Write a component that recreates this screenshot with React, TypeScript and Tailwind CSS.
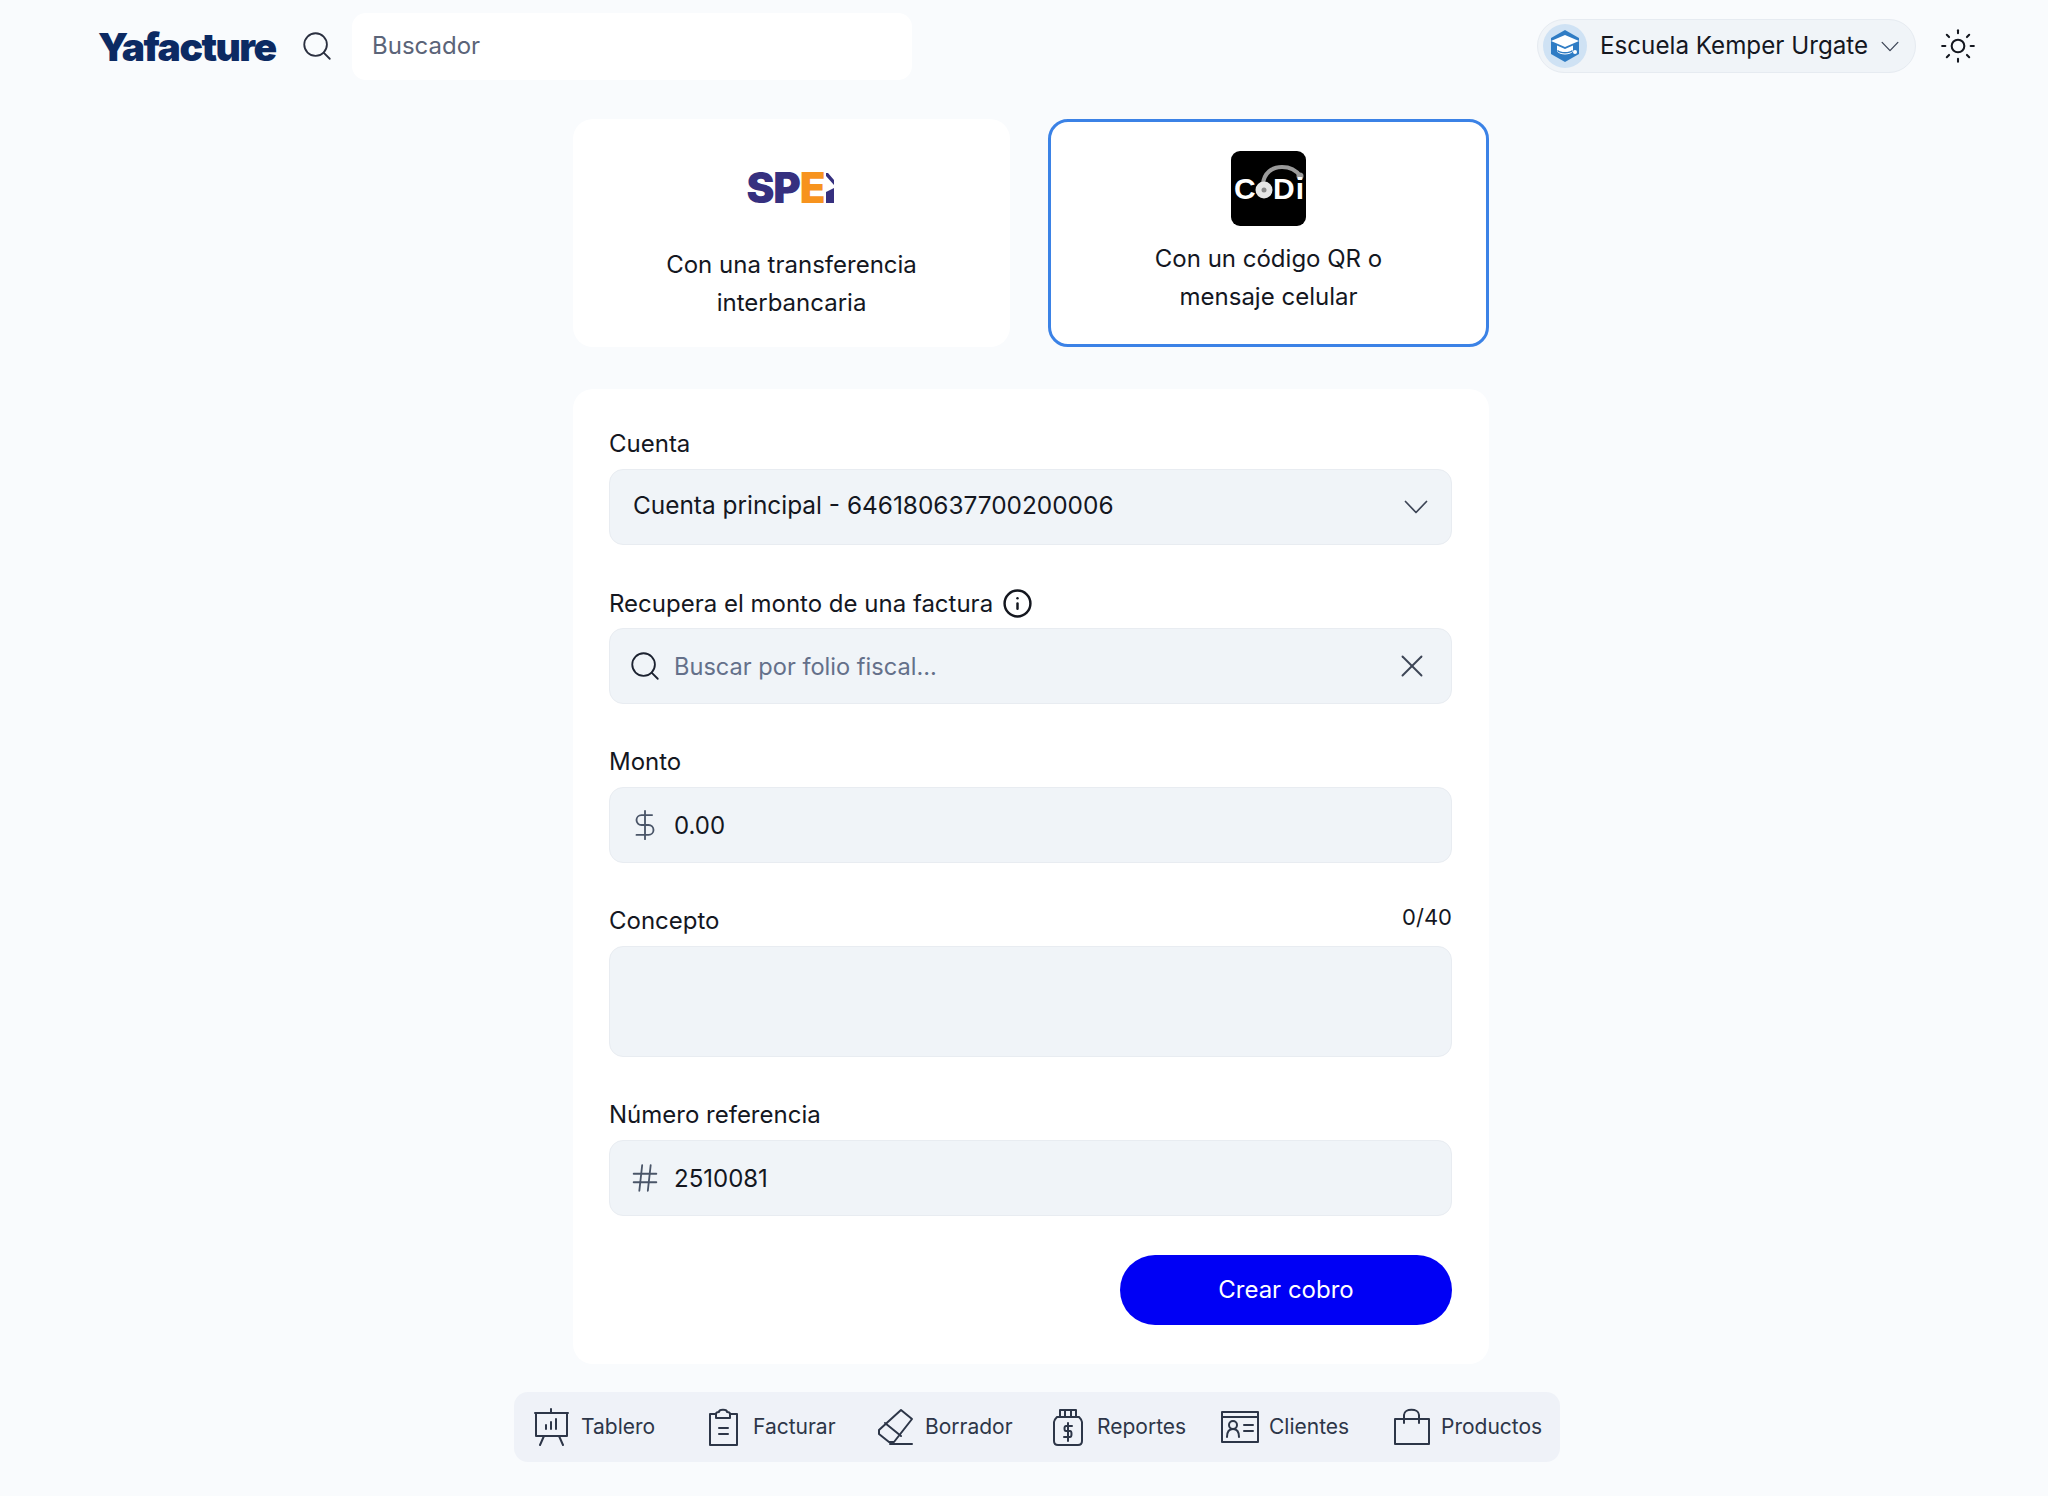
import type { ReactNode } from 'react'
import { Search, Sun, X, DollarSign, Hash, Info } from 'lucide-react'

const font = { fontFamily: 'Inter, "Noto Sans", sans-serif' }

function Chevron({ className, width, height }: { className: string; width: number; height: number }) {
  return (
    <svg className={className} width={width} height={height} viewBox="0 0 24 14" fill="none" stroke="currentColor" strokeWidth="1.7" strokeLinecap="round" strokeLinejoin="round">
      <path d="M1.5 1.5 12 12.5 22.5 1.5" />
    </svg>
  )
}

function SpeiLogo() {
  return (
    <div className="flex h-[36px] w-[90px] items-center text-[42px] leading-none font-black tracking-[-1.2px]">
      <span className="text-[#36307f]">SP</span>
      <span className="text-[#f7931e]">E</span>
      <svg className="ml-[2px] shrink-0" width="8" height="30" viewBox="0 0 8 30">
        <path d="M0 0h2l6 7V0v12L0 3zM0 19l8-4v15H0z" fill="#36307f" />
      </svg>
    </div>
  )
}

function CodiLogo() {
  return (
    <div className="relative h-[75px] w-[75px] rounded-[9px] bg-black" style={{ fontFamily: '"Liberation Sans", sans-serif' }}>
      <svg className="absolute inset-0" width="75" height="75" viewBox="0 0 75 75" fill="none">
        <path d="M32 33c1-11 9-17 19-17 8 0 14 3 18 9" stroke="#9b9b9b" strokeWidth="4" strokeLinecap="round" />
        <circle cx="69" cy="25" r="3.5" fill="#9b9b9b" />
        <circle cx="33" cy="39" r="8.5" fill="#e6e6e6" />
        <circle cx="33" cy="39" r="2.5" fill="#8a8a8a" />
      </svg>
      <span className="absolute top-[23px] left-[3px] text-[30px] leading-[30px] font-bold text-white">C</span>
      <span className="absolute top-[23px] left-[42px] text-[30px] leading-[30px] font-bold tracking-[1px] text-white">Di</span>
    </div>
  )
}

function SchoolBadge() {
  return (
    <div className="flex h-[44px] w-[44px] shrink-0 items-center justify-center rounded-full bg-[#cfe2f4]">
      <svg width="34" height="34" viewBox="0 0 34 34">
        <path d="M17 1 31 9v16l-14 8-14-8V9z" fill="#2f7cc4" />
        <path d="M17 6 31 12 17 18 3 12z" fill="#fff" />
        <path d="M9 16.5v6c3 4 13 4 16 0v-6l-8 3.5z" fill="#fff" />
        <path d="M9.5 21.5c3 3 12 3 15 0" stroke="#2f7cc4" strokeWidth="1.4" fill="none" />
        <circle cx="27" cy="23" r="2" fill="#fff" />
      </svg>
    </div>
  )
}

const navIconProps = {
  width: 38,
  height: 38,
  viewBox: '0 0 38 38',
  fill: 'none',
  stroke: '#2d3648',
  strokeWidth: 2,
  strokeLinecap: 'round' as const,
  strokeLinejoin: 'round' as const,
}

const navItems: { label: string; icon: ReactNode }[] = [
  {
    label: 'Tablero',
    icon: (
      <svg {...navIconProps}>
        <path d="M18 1v4M2 5h33M3 5h31v23H3zM11 28l-4 9M26 28l4 9M13 21v-4M18 21v-7M23 21V11" />
      </svg>
    ),
  },
  {
    label: 'Facturar',
    icon: (
      <svg {...navIconProps}>
        <path d="M11 6H5v31h27V6h-7M11 10h14V6c0-2-3-2-3-2 0-3-8-3-8 0 0 0-3 0-3 2zM14 20h9M14 26h9" />
      </svg>
    ),
  },
  {
    label: 'Borrador',
    icon: (
      <svg {...navIconProps}>
        <path d="M24 2 35 11 17 34h-5l-10-8v-4zM8 15l16 13M13 36h22" />
      </svg>
    ),
  },
  {
    label: 'Reportes',
    icon: (
      <svg {...navIconProps}>
        <path d="M11 2h16v7H11zM16 2v7M22 2v7M8 9h22c2 2 3 3 3 5v19c0 3-2 4-4 4H9c-2 0-4-1-4-4V14c0-2 1-3 3-5zM23 18h-6c-2 0-2 5 0 5h4c2 0 2 6 0 6h-6M19 15v18" />
      </svg>
    ),
  },
  {
    label: 'Clientes',
    icon: (
      <svg {...navIconProps}>
        <path d="M1 4h36v30H1zM1 9h36M6 29c0-6 3-8 6-8s6 2 6 8M23 17h9M23 23h9" />
        <circle cx="12" cy="17" r="4" />
      </svg>
    ),
  },
  {
    label: 'Productos',
    icon: (
      <svg {...navIconProps}>
        <path d="M2 11h34v25H2zM11 15V7c0-7 15-7 15 0v8" />
      </svg>
    ),
  },
]

function Field({ label, right, children }: { label: ReactNode; right?: ReactNode; children: ReactNode }) {
  return (
    <div className="flex flex-col gap-[11px]">
      <div className="flex h-[30px] items-start justify-between">
        <div className="flex items-center gap-[9px] pt-[1px] text-[24px] leading-[30px] text-[#14171f]">{label}</div>
        {right}
      </div>
      {children}
    </div>
  )
}

function InputBox({ icon, children, trailing }: { icon?: ReactNode; children: ReactNode; trailing?: ReactNode }) {
  return (
    <div className="flex h-[76px] items-center rounded-[14px] border border-[#e8ecf1] bg-[#f0f4f8]">
      {icon && <div className="flex w-[64px] shrink-0 items-center justify-center pl-[5px] text-[#4a5568]">{icon}</div>}
      <div className="min-w-0 flex-1">{children}</div>
      {trailing}
    </div>
  )
}

export default function App() {
  return (
    <div className="min-h-[1496px] bg-[#f9fbfd] text-[#14171f]" style={font}>
      <header className="flex h-[92px] items-center pl-[98px] pr-[71px]">
        <div className="w-[178px] text-[39px] leading-none font-black tracking-[-1.5px] text-[#0c2a63]">
          Yafacture
        </div>
        <Search className="ml-[24px] text-[#2b3040]" size={34} strokeWidth={1.3} />
        <div className="ml-[18px] flex h-[67px] w-[560px] items-center rounded-[14px] bg-white pl-[20px] text-[24px] text-[#5b6478]">
          Buscador
        </div>
        <div className="ml-auto flex h-[54px] w-[379px] items-center rounded-full border border-[#e6ebf1] bg-[#f0f4f8] pl-[5px]">
          <SchoolBadge />
          <span className="ml-[13px] text-[24.2px] whitespace-nowrap text-[#14171f]">Escuela Kemper Urgate</span>
          <Chevron className="ml-[13px] text-[#3d4556]" width={18} height={11} />
        </div>
        <Sun className="ml-[23px] text-[#14171f]" size={38} strokeWidth={1.3} />
      </header>

      <main className="ml-[573px] w-[916px]">
        <div className="grid grid-cols-[437px_1fr] gap-[38px] pt-[27px]">
          <button type="button" className="flex h-[228px] flex-col items-center rounded-[20px] bg-white pt-[51px] text-[24px] leading-[38px]">
            <SpeiLogo />
            <span className="mt-[40px] w-[300px]">Con una transferencia interbancaria</span>
          </button>
          <button type="button" className="flex h-[228px] flex-col items-center rounded-[20px] border-[3px] border-[#3b82e6] bg-white pt-[29px] text-[24px] leading-[38px]">
            <CodiLogo />
            <span className="mt-[14px] w-[300px]">Con un código QR o mensaje celular</span>
          </button>
        </div>

        <form className="mt-[42px] flex flex-col gap-[42px] rounded-[20px] bg-white pt-[39px] pr-[37px] pb-[39px] pl-[36px]">
          <Field label="Cuenta">
            <InputBox trailing={<Chevron className="mr-[23px] text-[#3d4556]" width={24} height={14} />}>
              <div className="pb-[4px] pl-[23px] text-[24.4px]">Cuenta principal - 646180637700200006</div>
            </InputBox>
          </Field>

          <Field label={<>Recupera el monto de una factura <Info size={31} strokeWidth={1.9} className="text-[#14171f]" /></>}>
            <InputBox icon={<Search size={34} strokeWidth={1.3} className="text-[#1c2230]" />} trailing={<X className="mr-[20px] text-[#3d4556]" size={38} strokeWidth={1.2} />}>
              <input className="w-full bg-transparent pt-[1px] text-[23.6px] outline-none placeholder:text-[#64708a]" placeholder="Buscar por folio fiscal..." />
            </InputBox>
          </Field>

          <Field label="Monto">
            <InputBox icon={<DollarSign size={34} strokeWidth={1.3} />}>
              <input className="w-full bg-transparent pt-[2px] text-[24px] outline-none" defaultValue="0.00" />
            </InputBox>
          </Field>

          <Field label="Concepto" right={<span className="-mt-[3px] text-[22px] leading-[30px]">0/40</span>}>
            <textarea className="h-[111px] resize-none rounded-[14px] border border-[#e8ecf1] bg-[#f0f4f8] outline-none" />
          </Field>

          <div className="flex flex-col">
            <Field label="Número referencia">
              <InputBox icon={<Hash size={34} strokeWidth={1.3} />}>
                <input className="w-full bg-transparent pt-[2px] text-[24px] outline-none" defaultValue="2510081" />
              </InputBox>
            </Field>
            <button type="button" className="mt-[39px] h-[70px] w-[332px] self-end rounded-full bg-[#0000f5] text-[24px] text-white">
              Crear cobro
            </button>
          </div>
        </form>
      </main>

      <nav className="mt-[28px] ml-[514px] grid h-[70px] w-[1046px] grid-cols-[repeat(5,172px)_1fr] items-center rounded-[14px] bg-[#eff2f8] pl-[19px]">
        {navItems.map((item) => (
          <div key={item.label} className="flex items-center gap-[10px] text-[21px] whitespace-nowrap text-[#2d3648]">
            {item.icon}
            <span>{item.label}</span>
          </div>
        ))}
      </nav>
    </div>
  )
}
